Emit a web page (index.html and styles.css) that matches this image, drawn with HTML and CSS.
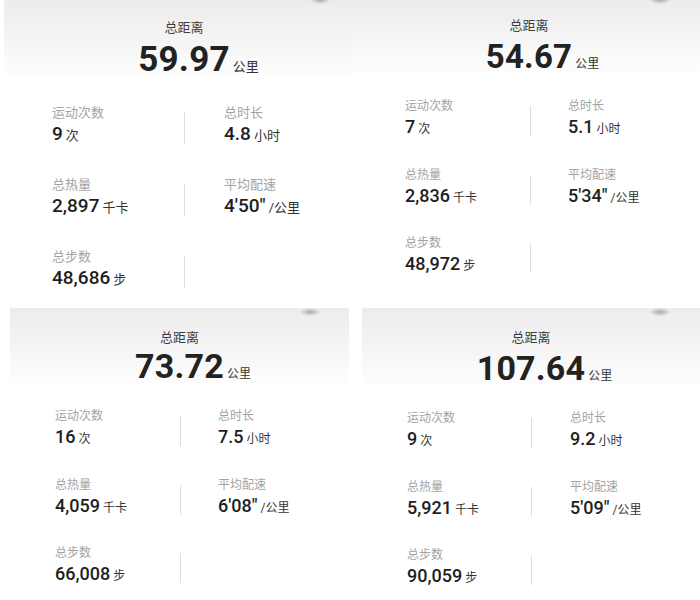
FILE: index.html
```html
<!DOCTYPE html>
<html lang="zh-CN">
<head>
<meta charset="utf-8">
<title>运动统计</title>
<link rel="stylesheet" href="styles.css">
</head>
<body>
<div class="collage">
  <section class="card card-a">
    <div class="head">
      <span class="blob"></span>
      <div class="title">总距离</div>
      <div class="total"><span class="num">59.97</span><span class="total-unit">公里</span></div>
    </div>
    <div class="stats">
      <div class="stat"><div class="label">运动次数</div><div class="value">9<span class="unit">次</span></div></div>
      <div class="sep"></div>
      <div class="stat"><div class="label">总时长</div><div class="value">4.8<span class="unit">小时</span></div></div>
      <div class="stat"><div class="label">总热量</div><div class="value">2,897<span class="unit">千卡</span></div></div>
      <div class="sep"></div>
      <div class="stat"><div class="label">平均配速</div><div class="value">4'50"<span class="unit">/公里</span></div></div>
      <div class="stat"><div class="label">总步数</div><div class="value">48,686<span class="unit">步</span></div></div>
      <div class="sep"></div>
    </div>
  </section>

  <section class="card card-b">
    <div class="head">
      <span class="blob"></span>
      <div class="title">总距离</div>
      <div class="total"><span class="num">54.67</span><span class="total-unit">公里</span></div>
    </div>
    <div class="stats">
      <div class="stat"><div class="label">运动次数</div><div class="value">7<span class="unit">次</span></div></div>
      <div class="sep"></div>
      <div class="stat"><div class="label">总时长</div><div class="value">5.1<span class="unit">小时</span></div></div>
      <div class="stat"><div class="label">总热量</div><div class="value">2,836<span class="unit">千卡</span></div></div>
      <div class="sep"></div>
      <div class="stat"><div class="label">平均配速</div><div class="value">5'34"<span class="unit">/公里</span></div></div>
      <div class="stat"><div class="label">总步数</div><div class="value">48,972<span class="unit">步</span></div></div>
      <div class="sep"></div>
    </div>
  </section>

  <section class="card card-c">
    <div class="head">
      <span class="blob"></span>
      <div class="title">总距离</div>
      <div class="total"><span class="num">73.72</span><span class="total-unit">公里</span></div>
    </div>
    <div class="stats">
      <div class="stat"><div class="label">运动次数</div><div class="value">16<span class="unit">次</span></div></div>
      <div class="sep"></div>
      <div class="stat"><div class="label">总时长</div><div class="value">7.5<span class="unit">小时</span></div></div>
      <div class="stat"><div class="label">总热量</div><div class="value">4,059<span class="unit">千卡</span></div></div>
      <div class="sep"></div>
      <div class="stat"><div class="label">平均配速</div><div class="value">6'08"<span class="unit">/公里</span></div></div>
      <div class="stat"><div class="label">总步数</div><div class="value">66,008<span class="unit">步</span></div></div>
      <div class="sep"></div>
    </div>
  </section>

  <section class="card card-d">
    <div class="head">
      <span class="blob"></span>
      <div class="title">总距离</div>
      <div class="total"><span class="num">107.64</span><span class="total-unit">公里</span></div>
    </div>
    <div class="stats">
      <div class="stat"><div class="label">运动次数</div><div class="value">9<span class="unit">次</span></div></div>
      <div class="sep"></div>
      <div class="stat"><div class="label">总时长</div><div class="value">9.2<span class="unit">小时</span></div></div>
      <div class="stat"><div class="label">总热量</div><div class="value">5,921<span class="unit">千卡</span></div></div>
      <div class="sep"></div>
      <div class="stat"><div class="label">平均配速</div><div class="value">5'09"<span class="unit">/公里</span></div></div>
      <div class="stat"><div class="label">总步数</div><div class="value">90,059<span class="unit">步</span></div></div>
      <div class="sep"></div>
    </div>
  </section>
</div>
</body>
</html>
```

FILE: styles.css
```css
* { box-sizing: border-box; }

html, body {
  margin: 0;
  padding: 0;
  background: #ffffff;
}

body {
  width: 700px;
  height: 600px;
  overflow: hidden;
  font-family: Roboto, "Noto Sans CJK SC", sans-serif;
  color: #222222;
}

.collage {
  display: grid;
  grid-template-columns: 352px 348px;
  grid-template-rows: 308px 292px;
}

/* ---------- card ---------- */
.card {
  --shift: 0px;
  --pad-top: 21px;
  --title-size: 13px;
  --num-size: 34px;
  --num-gap: 0px;
  --head-pb: 2px;
  --tu-size: 12px;
  --stats-top: 25px;
  --pad-l: 45px;
  --col-w: 125px;
  --col-gap: 37px;
  --row-gap: 25.5px;
  --lab-size: 12px;
  --lab-lh: 16px;
  --val-size: 18px;
  --val-lh: 24px;
  --val-gap: 1px;
  --unit-size: 12px;
  --div-top: 8px;
  --div-h: 30px;
  --blob-x: 290px;
  --blob-y: 0px;
  background: #ffffff;
  display: flex;
  flex-direction: column;
}

.card-a {
  margin-left: 4px;
  --shift: 12px;
  --pad-top: 19px;
  --num-size: 35px;
  --num-gap: 4px;
  --head-pb: 0px;
  --tu-size: 13px;
  --stats-top: 29px;
  --pad-l: 48px;
  --col-w: 132px;
  --col-gap: 39px;
  --row-gap: 28px;
  --lab-size: 13px;
  --lab-lh: 17px;
  --val-size: 19px;
  --val-lh: 25px;
  --val-gap: 0px;
  --unit-size: 13px;
  --div-h: 32px;
  --blob-x: 306px;
  --blob-y: -4px;
}

.card-b {
  --shift: 6px;
  --pad-top: 17px;
  --num-size: 33px;
  --num-gap: 3px;
  --head-pb: 0px;
  --stats-top: 26px;
  --pad-l: 53px;
  --col-w: 125px;
  --col-gap: 37px;
  --blob-x: 298px;
  --blob-y: -4px;
}

.card-c {
  margin-left: 10px;
  width: 339px;
  --num-gap: 0px;
  --stats-top: 25px;
  --pad-l: 45px;
  --col-w: 125px;
  --col-gap: 37px;
}

.card-d {
  margin-left: 10px;
  --num-gap: 2px;
  --stats-top: 25px;
  --pad-l: 45px;
  --col-w: 124px;
  --col-gap: 38px;
  --blob-x: 288px;
}

/* ---------- header ---------- */
.head {
  position: relative;
  padding: var(--pad-top) 0 var(--head-pb) var(--shift);
  background: linear-gradient(180deg, #ececec 0%, #f3f3f3 45%, #fbfbfb 85%, #fdfdfd 100%);
}

.blob {
  position: absolute;
  left: var(--blob-x);
  top: var(--blob-y);
  width: 20px;
  height: 8px;
  border-radius: 50%;
  background: radial-gradient(ellipse at center, rgba(0,0,0,0.28) 0%, rgba(0,0,0,0.08) 55%, rgba(0,0,0,0) 75%);
}

.title {
  text-align: center;
  font-size: var(--title-size);
  line-height: 18px;
  color: #3c3c3c;
}

.total {
  margin-top: var(--num-gap);
  margin-bottom: -4px;
  display: grid;
  grid-template-columns: 1fr auto 1fr;
  align-items: baseline;
}

.total::before {
  content: "";
}

.num {
  font-size: var(--num-size);
  line-height: 38px;
  font-weight: 700;
  color: #222222;
  letter-spacing: 0.2px;
}

.total-unit {
  justify-self: start;
  margin-left: 3px;
  font-size: var(--tu-size);
  line-height: 14px;
  color: #333333;
}

/* ---------- stats ---------- */
.stats {
  display: grid;
  grid-template-columns: var(--col-w) 1px 1fr;
  row-gap: var(--row-gap);
  align-items: start;
  padding: var(--stats-top) 0 0 var(--pad-l);
}

.sep + .stat {
  padding-left: var(--col-gap);
}

.sep {
  width: 1px;
  margin-top: var(--div-top);
  height: var(--div-h);
  background: #dedede;
}

.label {
  font-size: var(--lab-size);
  line-height: var(--lab-lh);
  color: #a3a3a3;
  white-space: nowrap;
}

.value {
  margin-top: var(--val-gap);
  font-size: var(--val-size);
  line-height: var(--val-lh);
  font-weight: 500;
  color: #1e1e1e;
  white-space: nowrap;
}

.unit {
  margin-left: 3px;
  font-size: var(--unit-size);
  font-weight: 400;
  color: #333333;
}
```
